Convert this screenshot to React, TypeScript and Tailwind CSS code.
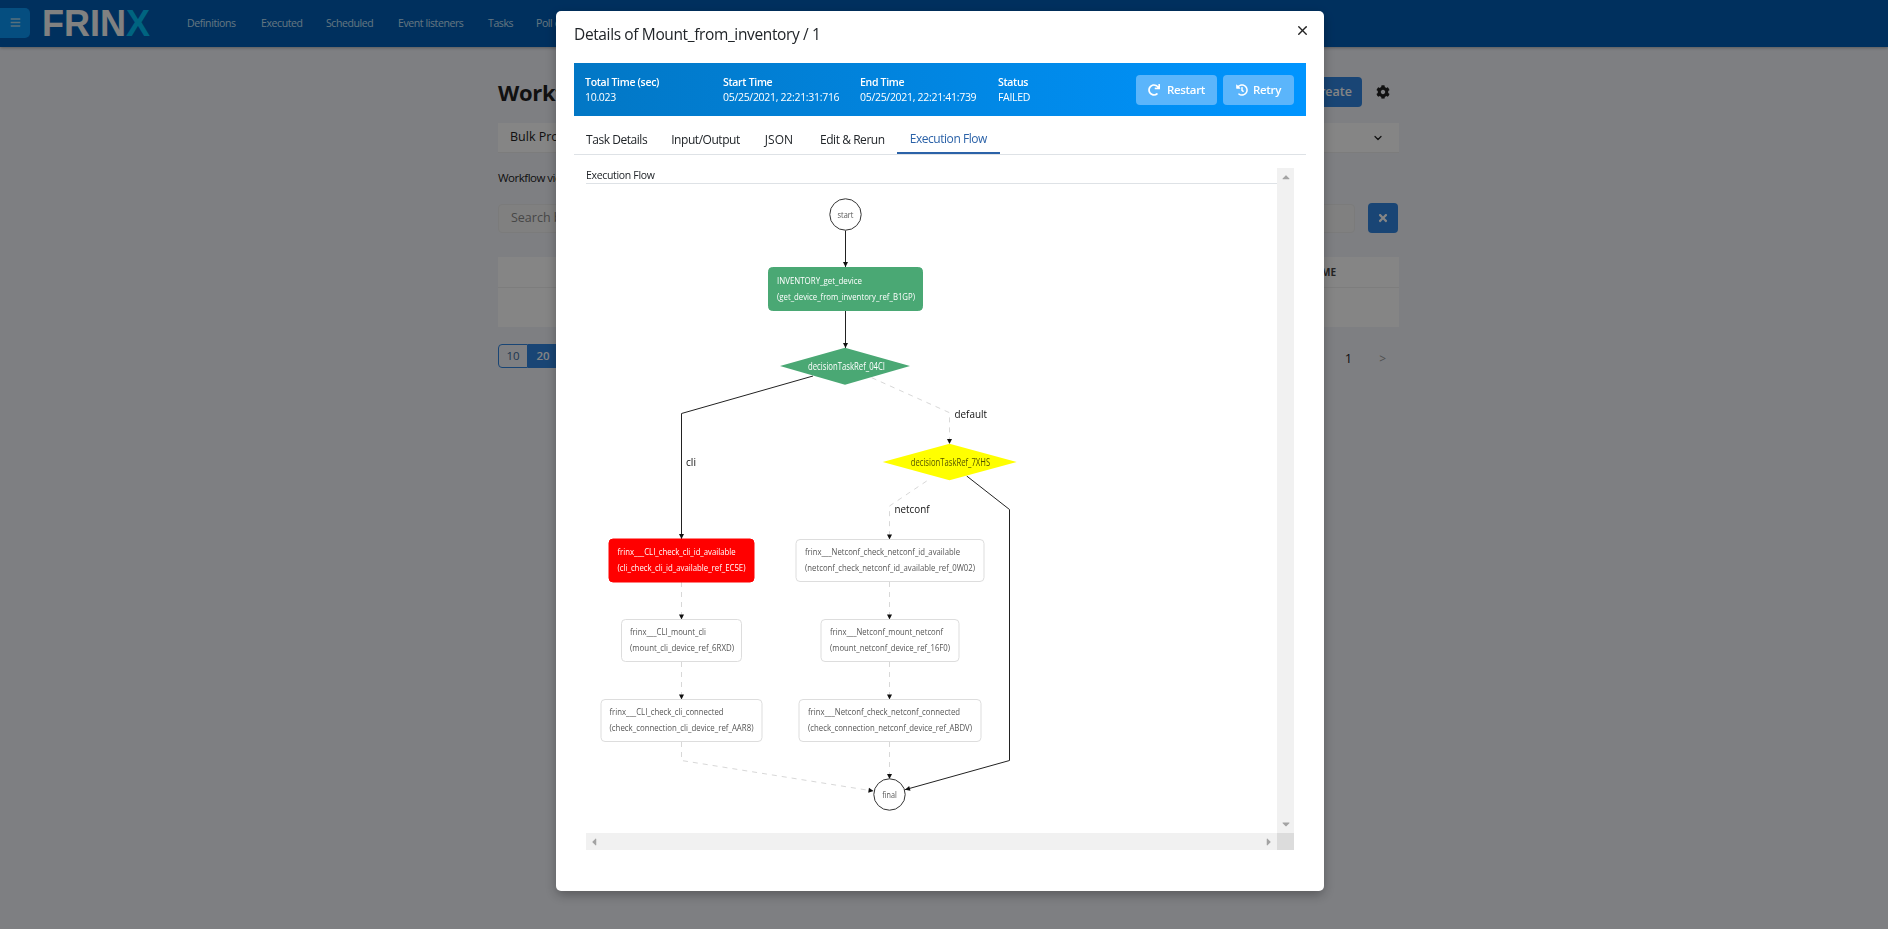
import { FaBars, FaCog, FaHistory, FaRedo, FaTimes, FaCaretUp, FaCaretDown, FaCaretLeft, FaCaretRight } from "react-icons/fa";
import { ChevronDown, X } from "lucide-react";

const FONT = "font-['Open_Sans','Noto_Sans',sans-serif]";

const navItems = [
  { label: "Definitions", w: "w-[50px]" },
  { label: "Executed", w: "w-[41px]" },
  { label: "Scheduled", w: "w-[48px]" },
  { label: "Event listeners", w: "w-[66px]" },
  { label: "Tasks", w: "w-[24px]" },
  { label: "Poll data", w: "w-[40px]" },
];

type NodeT = {
  x: number; y: number; w: number; h: number; fill: string; stroke: string; color: string; tx: number; ty: number;
  a: string; al: number; b: string; bl: number;
};

const nodes: NodeT[] = [
  { x: 768.5, y: 266.5, w: 154, h: 43, fill: "#4aa874", stroke: "#4aa874", color: "#ffffff", tx: 777, ty: 283, a: "INVENTORY_get_device", al: 85, b: "(get_device_from_inventory_ref_B1GP)", bl: 138 },
  { x: 609, y: 538, w: 145, h: 43, fill: "#ff0000", stroke: "#ff0000", color: "#ffffff", tx: 617.5, ty: 554, a: "frinx___CLI_check_cli_id_available", al: 118, b: "(cli_check_cli_id_available_ref_EC5E)", bl: 128 },
  { x: 796, y: 538.5, w: 188, h: 42, fill: "#ffffff", stroke: "#dddddd", color: "#555555", tx: 805, ty: 554, a: "frinx___Netconf_check_netconf_id_available", al: 155, b: "(netconf_check_netconf_id_available_ref_0W02)", bl: 170 },
  { x: 621.5, y: 618.5, w: 120, h: 42, fill: "#ffffff", stroke: "#dddddd", color: "#555555", tx: 630, ty: 634, a: "frinx___CLI_mount_cli", al: 76, b: "(mount_cli_device_ref_6RXD)", bl: 104 },
  { x: 821, y: 618.5, w: 138, h: 42, fill: "#ffffff", stroke: "#dddddd", color: "#555555", tx: 830, ty: 634, a: "frinx___Netconf_mount_netconf", al: 113, b: "(mount_netconf_device_ref_16F0)", bl: 120 },
  { x: 601, y: 698.5, w: 161, h: 42, fill: "#ffffff", stroke: "#dddddd", color: "#555555", tx: 609.5, ty: 714, a: "frinx___CLI_check_cli_connected", al: 114, b: "(check_connection_cli_device_ref_AAR8)", bl: 144 },
  { x: 799, y: 698.5, w: 182, h: 42, fill: "#ffffff", stroke: "#dddddd", color: "#555555", tx: 808, ty: 714, a: "frinx___Netconf_check_netconf_connected", al: 152, b: "(check_connection_netconf_device_ref_ABDV)", bl: 164 },
];

const solid = [
  "M845.5 229.5V266",
  "M845.5 309.5V347",
  "M813 375L681.5 412.5V538",
  "M966.7 475L1009.5 508.5V759.5L905 788.7",
];
const dashed = [
  "M871.7 376.7L949.5 411.7V443",
  "M926.7 480L889.5 505V538.5",
  "M681.5 581V618.5",
  "M681.5 661V698.5",
  "M681.5 741V759.5L873 790",
  "M889.5 581V618.5",
  "M889.5 661V698.5",
  "M889.5 741V778",
];
const arrows: [number, number, number][] = [
  [845.5, 266, 90], [845.5, 347, 90], [681.5, 538, 90], [949.5, 443, 90], [889.5, 538.5, 90],
  [681.5, 618.5, 90], [681.5, 698.5, 90], [889.5, 618.5, 90], [889.5, 698.5, 90], [889.5, 778, 90],
  [873.5, 790, 9], [905, 788.7, 165],
];

function Graph() {
  return (
    <svg viewBox="586 183 691 649" className="block h-[649px] w-[691px]" fontFamily="'Open Sans', sans-serif">
      {solid.map((d) => <path key={d} d={d} fill="none" stroke="#222222" strokeWidth="1" />)}
      {dashed.map((d) => <path key={d} d={d} fill="none" stroke="#d8d8d8" strokeWidth="1" strokeDasharray="5 5" />)}
      {arrows.map(([x, y, r]) => (
        <polygon key={`${x}-${y}`} points="0,0 -5,-2.5 -5,2.5" fill="#111111" transform={`translate(${x} ${y}) rotate(${r})`} />
      ))}

      <circle cx="845.5" cy="213.5" r="15.7" fill="#ffffff" stroke="#333333" />
      <text x="845.5" y="216.5" textAnchor="middle" fontSize="8.5" fill="#555555" textLength={16} lengthAdjust="spacingAndGlyphs">start</text>
      <circle cx="889.5" cy="793.5" r="15.7" fill="#ffffff" stroke="#333333" />
      <text x="889.5" y="796.5" textAnchor="middle" fontSize="8.5" fill="#555555" textLength={14.5} lengthAdjust="spacingAndGlyphs">final</text>

      <polygon points="780,365 845,346.7 910,365 845,383.7" fill="#4aa874" />
      <text x="808" y="368.5" fontSize="10" fill="#ffffff" textLength={77} lengthAdjust="spacingAndGlyphs">decisionTaskRef_04CI</text>
      <polygon points="882.7,461 949.5,442.7 1016.7,461 949.5,479.3" fill="#ffff00" />
      <text x="910.7" y="464.5" fontSize="10" fill="#555500" textLength={79.5} lengthAdjust="spacingAndGlyphs">decisionTaskRef_7XHS</text>

      {nodes.map((n) => (
        <g key={n.a}>
          <rect x={n.x} y={n.y} width={n.w} height={n.h} rx="4" fill={n.fill} stroke={n.stroke} />
          <text x={n.tx} y={n.ty} fontSize="9.5" fill={n.color} textLength={n.al} lengthAdjust="spacingAndGlyphs">{n.a}</text>
          <text x={n.tx} y={n.ty + 16} fontSize="9.5" fill={n.color} textLength={n.bl} lengthAdjust="spacingAndGlyphs">{n.b}</text>
        </g>
      ))}

      <text x="686" y="464.5" fontSize="11" fill="#111111" textLength={10} lengthAdjust="spacingAndGlyphs">cli</text>
      <text x="954.5" y="417" fontSize="11" fill="#111111" textLength={32.5} lengthAdjust="spacingAndGlyphs">default</text>
      <text x="894.5" y="512" fontSize="11" fill="#111111" textLength={35} lengthAdjust="spacingAndGlyphs">netconf</text>
    </svg>
  );
}

function Stat({ title, value, w }: { title: string; value: string; w: string }) {
  return (
    <div className={`${w} shrink-0 whitespace-nowrap text-[10.5px] leading-[15px] tracking-[-0.3px] text-white`}>
      <div className="font-semibold">{title}</div>
      <div>{value}</div>
    </div>
  );
}

function Page() {
  return (
    <div className={`h-[929px] w-[1888px] overflow-hidden bg-[#f2f4fa] ${FONT}`}>
      <header className="flex h-[47px] items-center bg-[#005cb5] shadow-[0_1px_3px_rgba(0,0,0,0.3)]">
        <button className="mt-[-2px] flex h-[30px] w-[30px] items-center justify-center rounded-r-[5px] bg-[#0a96f5] text-[#a8d8f0]">
          <FaBars className="text-[11px]" />
        </button>
        <div className="ml-[12px] w-[145px] font-['Liberation_Sans',sans-serif] text-[36px] font-bold leading-[36px] text-[#f8f8f8]">
          FRIN<span className="text-[#00c0f5]">X</span>
        </div>
        <nav className="flex items-center gap-[24px] text-[10.5px] tracking-[-0.4px] text-[#c0e0f5]">
          {navItems.map((n) => (
            <span key={n.label} className={`${n.w} whitespace-nowrap`}>{n.label}</span>
          ))}
        </nav>
      </header>

      <main className="ml-[498px] w-[901px] pt-[30px]">
        <div className="flex h-[30px] items-center">
          <h1 className="text-[22px] font-bold tracking-[-0.3px] text-[#222222]">Workflows</h1>
          <button className="ml-auto mr-[37px] h-[30px] w-[80px] rounded-[4px] bg-[#3085e0] pl-[20px] text-[12.5px] font-semibold text-white">Create</button>
        </div>
        <div className="absolute right-[498px] top-[85px]"><FaCog className="text-[14px] text-[#222222]" /></div>
        <div className="mt-[16px] flex h-[30px] items-center justify-between border-b border-[#eeeeee] bg-white pl-[12px] pr-[15px] text-[12.5px] text-[#222222]">
          <span>Bulk Processing</span>
          <ChevronDown className="h-[12px] w-[12px]" strokeWidth={2.5} />
        </div>
        <p className="mt-[17px] h-[16px] text-[11.5px] leading-[16px] tracking-[-0.5px] text-[#222222]">Workflow view</p>
        <div className="mt-[17px] flex items-center gap-[13px]">
          <div className="flex h-[29px] w-[857px] items-center rounded-[4px] border border-[#ebebeb] bg-[#f6f6f6] pl-[12px] text-[12.5px] text-[#888888]">Search by keyword</div>
          <button className="flex h-[30px] w-[30px] items-center justify-center rounded-[4px] bg-[#3085e0] text-white"><FaTimes className="text-[12px]" /></button>
        </div>
        <div className="mt-[24px] bg-white">
          <div className="flex h-[31px] items-center justify-end border-b border-[#f0f0f0] pr-[63px] text-[10px] font-bold text-[#444444]">NAME</div>
          <div className="h-[39px]" />
        </div>
        <div className="mt-[16px] flex items-center text-[11.5px]">
          <span className="flex h-[24px] w-[30px] items-center justify-center rounded-l-[4px] border border-[#3085e0] text-[#3a6a9a]">10</span>
          <span className="flex h-[24px] w-[30px] items-center justify-center bg-[#3085e0] font-semibold text-white">20</span>
          <span className="ml-auto mr-[27px] mt-[6px] text-[13px] text-[#222222]">1</span>
          <span className="mr-[13px] mt-[6px] text-[12px] text-[#999999]">&gt;</span>
        </div>
      </main>
    </div>
  );
}

export default function App() {
  return (
    <div className="relative h-[929px] w-[1888px] overflow-hidden">
      <Page />
      <div className={`fixed inset-0 flex items-start justify-center bg-black/[0.48] pr-[8px] ${FONT}`}>
        <div className="mt-[11px] h-[880px] w-[768px] rounded-[5px] bg-white px-[18px] shadow-[0_4px_12px_rgba(0,0,0,0.3)]">
          <div className="flex h-[52px] items-center justify-between pb-[4px]">
            <h2 className="text-[15.5px] tracking-[-0.37px] text-[#212529]">Details of Mount_from_inventory / 1</h2>
            <X className="mr-[-4px] mt-[-10px] h-[15px] w-[15px] text-[#222222]" strokeWidth={2.2} />
          </div>

          <div className="flex h-[53px] items-center bg-gradient-to-r from-[#0277c5] to-[#0095ff] pl-[11px] pr-[12px]">
            <Stat title="Total Time (sec)" value="10.023" w="w-[138px]" />
            <Stat title="Start Time" value="05/25/2021, 22:21:31:716" w="w-[137px]" />
            <Stat title="End Time" value="05/25/2021, 22:21:41:739" w="w-[138px]" />
            <Stat title="Status" value="FAILED" w="w-[60px]" />
            <div className="ml-auto flex gap-[6px]">
              <button className="flex h-[30px] w-[81px] items-center justify-center gap-[7px] rounded-[4px] bg-[#5bb5fb] text-[11.5px] font-semibold tracking-[-0.3px] text-white">
                <FaRedo className="text-[12px]" />Restart
              </button>
              <button className="flex h-[30px] w-[71px] items-center justify-center gap-[5px] rounded-[4px] bg-[#5bb5fb] text-[11.5px] font-semibold tracking-[-0.3px] text-white">
                <FaHistory className="text-[12px]" />Retry
              </button>
            </div>
          </div>

          <div className="mt-[1px] flex h-[38px] items-stretch border-b border-[#dee2e6] text-[12px] tracking-[-0.45px] text-[#212529]">
            <span className="flex items-center px-[12px] pt-[8px]">Task Details</span>
            <span className="flex items-center px-[12px] pt-[8px]">Input/Output</span>
            <span className="flex items-center pl-[13px] pr-[15px] pt-[8px] tracking-[0px]">JSON</span>
            <span className="flex items-center px-[12px] pt-[8px]">Edit &amp; Rerun</span>
            <span className="flex items-center border-b-2 border-[#2b62a8] px-[13px] pt-[9px] text-[#2b62a8]">Execution Flow</span>
          </div>

          <div className="mx-[12px] mt-[13px] flex h-[682px] w-[708px] flex-col">
            <div className="flex min-h-0 flex-1">
              <div className="w-[691px]">
                <div className="h-[16px] border-b border-[#dee2e6] text-[10.5px] leading-[14px] tracking-[-0.32px] text-[#212529]">Execution Flow</div>
                <Graph />
              </div>
              <div className="flex w-[17px] flex-col items-center justify-between bg-[#f1f1f1] py-[3px] text-[#a3a3a3]">
                <FaCaretUp className="text-[12px]" />
                <FaCaretDown className="text-[12px]" />
              </div>
            </div>
            <div className="flex h-[17px] items-stretch">
              <div className="flex w-[691px] items-center justify-between bg-[#f1f1f1] px-[2px] text-[#a3a3a3]">
                <FaCaretLeft className="text-[12px]" />
                <FaCaretRight className="text-[12px]" />
              </div>
              <div className="w-[17px] bg-[#dcdcdc]" />
            </div>
          </div>
        </div>
      </div>
    </div>
  );
}
